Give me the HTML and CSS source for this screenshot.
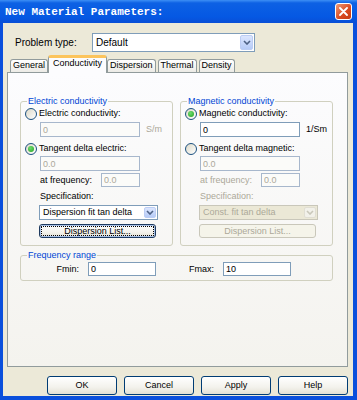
FILE: index.html
```html
<!DOCTYPE html>
<html lang="en">
<head>
    <meta charset="UTF-8">
    <meta name="viewport" content="width=device-width, initial-scale=1.0">
    <title>New Material Parameters</title>
    <link rel="stylesheet" href="styles.css">
</head>
<body>
    <div class="window">
        <div class="titlebar">
            <span class="title">New Material Parameters:</span>
            <button class="close-btn">
                <svg viewBox="0 0 9 9" width="9" height="9">
                    <path d="M1 1L8 8M8 1L1 8" stroke="#fff" stroke-width="1.8" stroke-linecap="round"/>
                </svg>
            </button>
        </div>

        <div class="client">
            <div class="problem-row">
                <span class="problem-label">Problem type:</span>
                <div class="combo combo-wide">
                    <span class="combo-text">Default</span>
                    <span class="combo-arrow">
                        <svg viewBox="0 0 8 5" width="8" height="5"><path d="M1 1L4 4L7 1" fill="none" stroke="#4d6185" stroke-width="1.6"/></svg>
                    </span>
                </div>
            </div>

            <div class="tabs">
                <div class="tab">General</div>
                <div class="tab tab-active">Conductivity</div>
                <div class="tab">Dispersion</div>
                <div class="tab">Thermal</div>
                <div class="tab">Density</div>
            </div>

            <div class="panel">
                <div class="groups">
                    <!-- Electric -->
                    <fieldset class="group">
                        <legend>Electric conductivity</legend>
                        <div class="radio-row"><span class="radio"></span>Electric conductivity:</div>
                        <div class="field-row field-first">
                            <input class="edit" value="0" disabled>
                            <span class="unit dim">S/m</span>
                        </div>
                        <div class="radio-row radio-second"><span class="radio radio-checked"></span>Tangent delta electric:</div>
                        <div class="field-row field-second">
                            <input class="edit" value="0.0" disabled>
                        </div>
                        <div class="freq-row">
                            <span>at frequency:</span>
                            <input class="edit edit-short" value="0.0" disabled>
                        </div>
                        <div class="spec-label">Specification:</div>
                        <div class="combo combo-small">
                            <span class="combo-text">Dispersion fit tan delta</span>
                            <span class="combo-arrow">
                                <svg viewBox="0 0 8 5" width="8" height="5"><path d="M1 1L4 4L7 1" fill="none" stroke="#4d6185" stroke-width="1.6"/></svg>
                            </span>
                        </div>
                        <button class="btn btn-list btn-focus">Dispersion List...</button>
                    </fieldset>

                    <!-- Magnetic -->
                    <fieldset class="group">
                        <legend>Magnetic conductivity</legend>
                        <div class="radio-row"><span class="radio radio-checked"></span>Magnetic conductivity:</div>
                        <div class="field-row field-first">
                            <input class="edit" value="0">
                            <span class="unit">1/Sm</span>
                        </div>
                        <div class="radio-row radio-second"><span class="radio"></span>Tangent delta magnetic:</div>
                        <div class="field-row field-second">
                            <input class="edit" value="0.0" disabled>
                        </div>
                        <div class="freq-row dim">
                            <span>at frequency:</span>
                            <input class="edit edit-short" value="0.0" disabled>
                        </div>
                        <div class="spec-label dim">Specification:</div>
                        <div class="combo combo-small combo-disabled">
                            <span class="combo-text">Const. fit tan delta</span>
                            <span class="combo-arrow">
                                <svg viewBox="0 0 8 5" width="8" height="5"><path d="M1 1L4 4L7 1" fill="none" stroke="#c9c7ba" stroke-width="1.6"/></svg>
                            </span>
                        </div>
                        <button class="btn btn-list" disabled>Dispersion List...</button>
                    </fieldset>
                </div>

                <fieldset class="group group-freq">
                    <legend>Frequency range</legend>
                    <div class="range-row">
                        <span class="range-label">Fmin:</span>
                        <input class="edit edit-range" value="0">
                        <span class="range-label">Fmax:</span>
                        <input class="edit edit-range" value="10">
                    </div>
                </fieldset>
            </div>

            <div class="buttons">
                <button class="btn">OK</button>
                <button class="btn">Cancel</button>
                <button class="btn">Apply</button>
                <button class="btn">Help</button>
            </div>
        </div>
    </div>
</body>
</html>
```

FILE: styles.css
```css
:root {
    --face: #ece9d8;
    --edit-border: #7f9db9;
    --group-border: #d0d0bf;
    --tab-border: #919b9c;
    --disabled-text: #aca899;
    --legend: #0046d5;
}

* {
    margin: 0;
    padding: 0;
    box-sizing: border-box;
}

body {
    margin: 0;
    font-family: 'Liberation Sans', Arial, sans-serif;
    font-size: 9px;
    line-height: 11px;
    color: #000;
}

.window {
    width: 357px;
    height: 400px;
    display: flex;
    flex-direction: column;
    background: #0a4fdc;
}

/* Title bar */
.titlebar {
    height: 23px;
    display: flex;
    align-items: center;
    padding: 0 5px;
    background: linear-gradient(#3d8ff5 0, #0d61e4 3px, #0558e3 17px, #0a4fd6 23px);
}

.title {
    color: #fff;
    font: bold 11px 'Liberation Mono', monospace;
}

.close-btn {
    margin-left: auto;
    width: 17px;
    height: 17px;
    border: 1px solid #fff;
    border-radius: 3px;
    background: linear-gradient(135deg, #ee9977, #d8471e 60%, #c53c14);
    display: flex;
    align-items: center;
    justify-content: center;
}

/* Client area */
.client {
    flex: 1;
    margin: 0 4px 4px 3px;
    background: var(--face);
    display: flex;
    flex-direction: column;
}

.problem-row {
    display: flex;
    align-items: center;
    height: 19px;
    margin-top: 10px;
    padding-left: 12px;
}

.problem-label {
    width: 77px;
    font-size: 10px;
}

/* Combo boxes */
.combo {
    display: flex;
    border: 1px solid var(--edit-border);
    background: #fff;
    padding: 1px;
}

.combo-wide {
    width: 163px;
    height: 19px;
    font-size: 10px;
}

.combo-text {
    flex: 1;
    display: flex;
    align-items: center;
    padding-left: 2px;
    white-space: nowrap;
}

.combo-arrow {
    width: 13px;
    display: flex;
    align-items: center;
    justify-content: center;
    border: 1px solid #bccdf4;
    border-radius: 2px;
    background: linear-gradient(#dce6fe, #b6cbf7);
}

.combo-small {
    width: 119px;
    height: 15px;
    margin: 3px 0 0 14px;
}

.combo-small .combo-arrow {
    width: 12px;
}

.combo-disabled {
    border-color: #c9c7ba;
    background: #ebe8d6;
    color: var(--disabled-text);
}

.combo-disabled .combo-arrow {
    border-color: #e0ded3;
    background: #f2f1ea;
}

/* Tabs */
.tabs {
    display: flex;
    align-items: flex-end;
    height: 17px;
    margin: 3px 0 0 7px;
    position: relative;
    z-index: 1;
}

.tab {
    height: 13px;
    padding: 0 2px;
    margin-right: 2px;
    line-height: 11px;
    border: 1px solid var(--tab-border);
    border-bottom: none;
    border-radius: 3px 3px 0 0;
    background: linear-gradient(#fff, #ecebe6);
}

.tab-active {
    height: 18px;
    margin: 0 0 -1px -2px;
    padding: 0 4px;
    line-height: 10px;
    border-top: 3px solid #fcc45c;
    background: #fcfcfe;
}

.panel {
    height: 295px;
    margin: 0 5px 0 4px;
    padding: 23px 0 0 12px;
    border: 1px solid var(--tab-border);
    background: linear-gradient(#fcfcfe, #f4f3ee);
}

/* Group boxes */
.groups {
    display: flex;
    gap: 7px;
}

.group {
    width: 153px;
    min-width: 0;
    padding: 0 4px 7px;
    border: 1px solid var(--group-border);
    border-radius: 3px;
}

.group legend {
    margin-left: 2px;
    padding: 0 1px;
    color: var(--legend);
    line-height: 11px;
}

.radio-row {
    display: flex;
    align-items: center;
    gap: 2px;
    height: 13px;
}

.radio-second {
    margin-top: 5px;
}

.radio {
    width: 12px;
    height: 12px;
    border: 1px solid #1c5180;
    border-radius: 50%;
    background: linear-gradient(135deg, #dcd9c8, #fff);
    display: flex;
    align-items: center;
    justify-content: center;
}

.radio-checked::after {
    content: '';
    width: 6px;
    height: 6px;
    border-radius: 50%;
    background: radial-gradient(circle at 40% 35%, #6fdc6f, #21a121);
}

.field-row {
    display: flex;
    align-items: center;
    margin-left: 15px;
}

.field-first {
    margin-top: 2px;
}

.field-second {
    margin-top: 1px;
}

.edit {
    width: 100px;
    height: 15px;
    padding: 0 2px;
    border: 1px solid var(--edit-border);
    background: #fff;
    color: #000;
    font: inherit;
    outline: none;
}

.edit:disabled {
    color: var(--disabled-text);
    border-color: #a7b7cc;
    background: #fbfbf9;
}

.unit {
    margin-left: 6px;
}

.dim {
    color: var(--disabled-text);
}

.freq-row {
    width: 100px;
    display: flex;
    align-items: center;
    justify-content: space-between;
    margin: 2px 0 0 15px;
}

.edit-short {
    width: 39px;
    height: 14px;
}

.spec-label {
    margin: 4px 0 0 15px;
}

/* Buttons */
.btn {
    width: 70px;
    height: 19px;
    border: 1px solid #003c74;
    border-radius: 3px;
    background: linear-gradient(#fff, #f3f2ec 60%, #e3e0d4);
    font: inherit;
    color: #000;
}

.btn-list {
    width: 117px;
    height: 14px;
    margin: 4px 0 0 14px;
    display: block;
}

.btn-focus {
    border-color: #1e3a5f;
    box-shadow: inset 0 0 0 1px #a9c2e8;
    outline: 1px dotted #000;
    outline-offset: -3px;
}

.btn:disabled {
    border-color: #c9c7ba;
    background: #f5f4ea;
    color: var(--disabled-text);
}

.group-freq {
    width: 313px;
    margin-top: 4px;
    padding: 1px 4px 4px;
}

.range-row {
    display: grid;
    grid-template-columns: 54px 68px 49px 68px;
    column-gap: 9px;
    align-items: center;
}

.range-label {
    text-align: right;
}

.edit-range {
    width: 68px;
    height: 14px;
}

.buttons {
    display: flex;
    justify-content: flex-end;
    gap: 7px;
    margin: 9px 5px 0 0;
}
```
